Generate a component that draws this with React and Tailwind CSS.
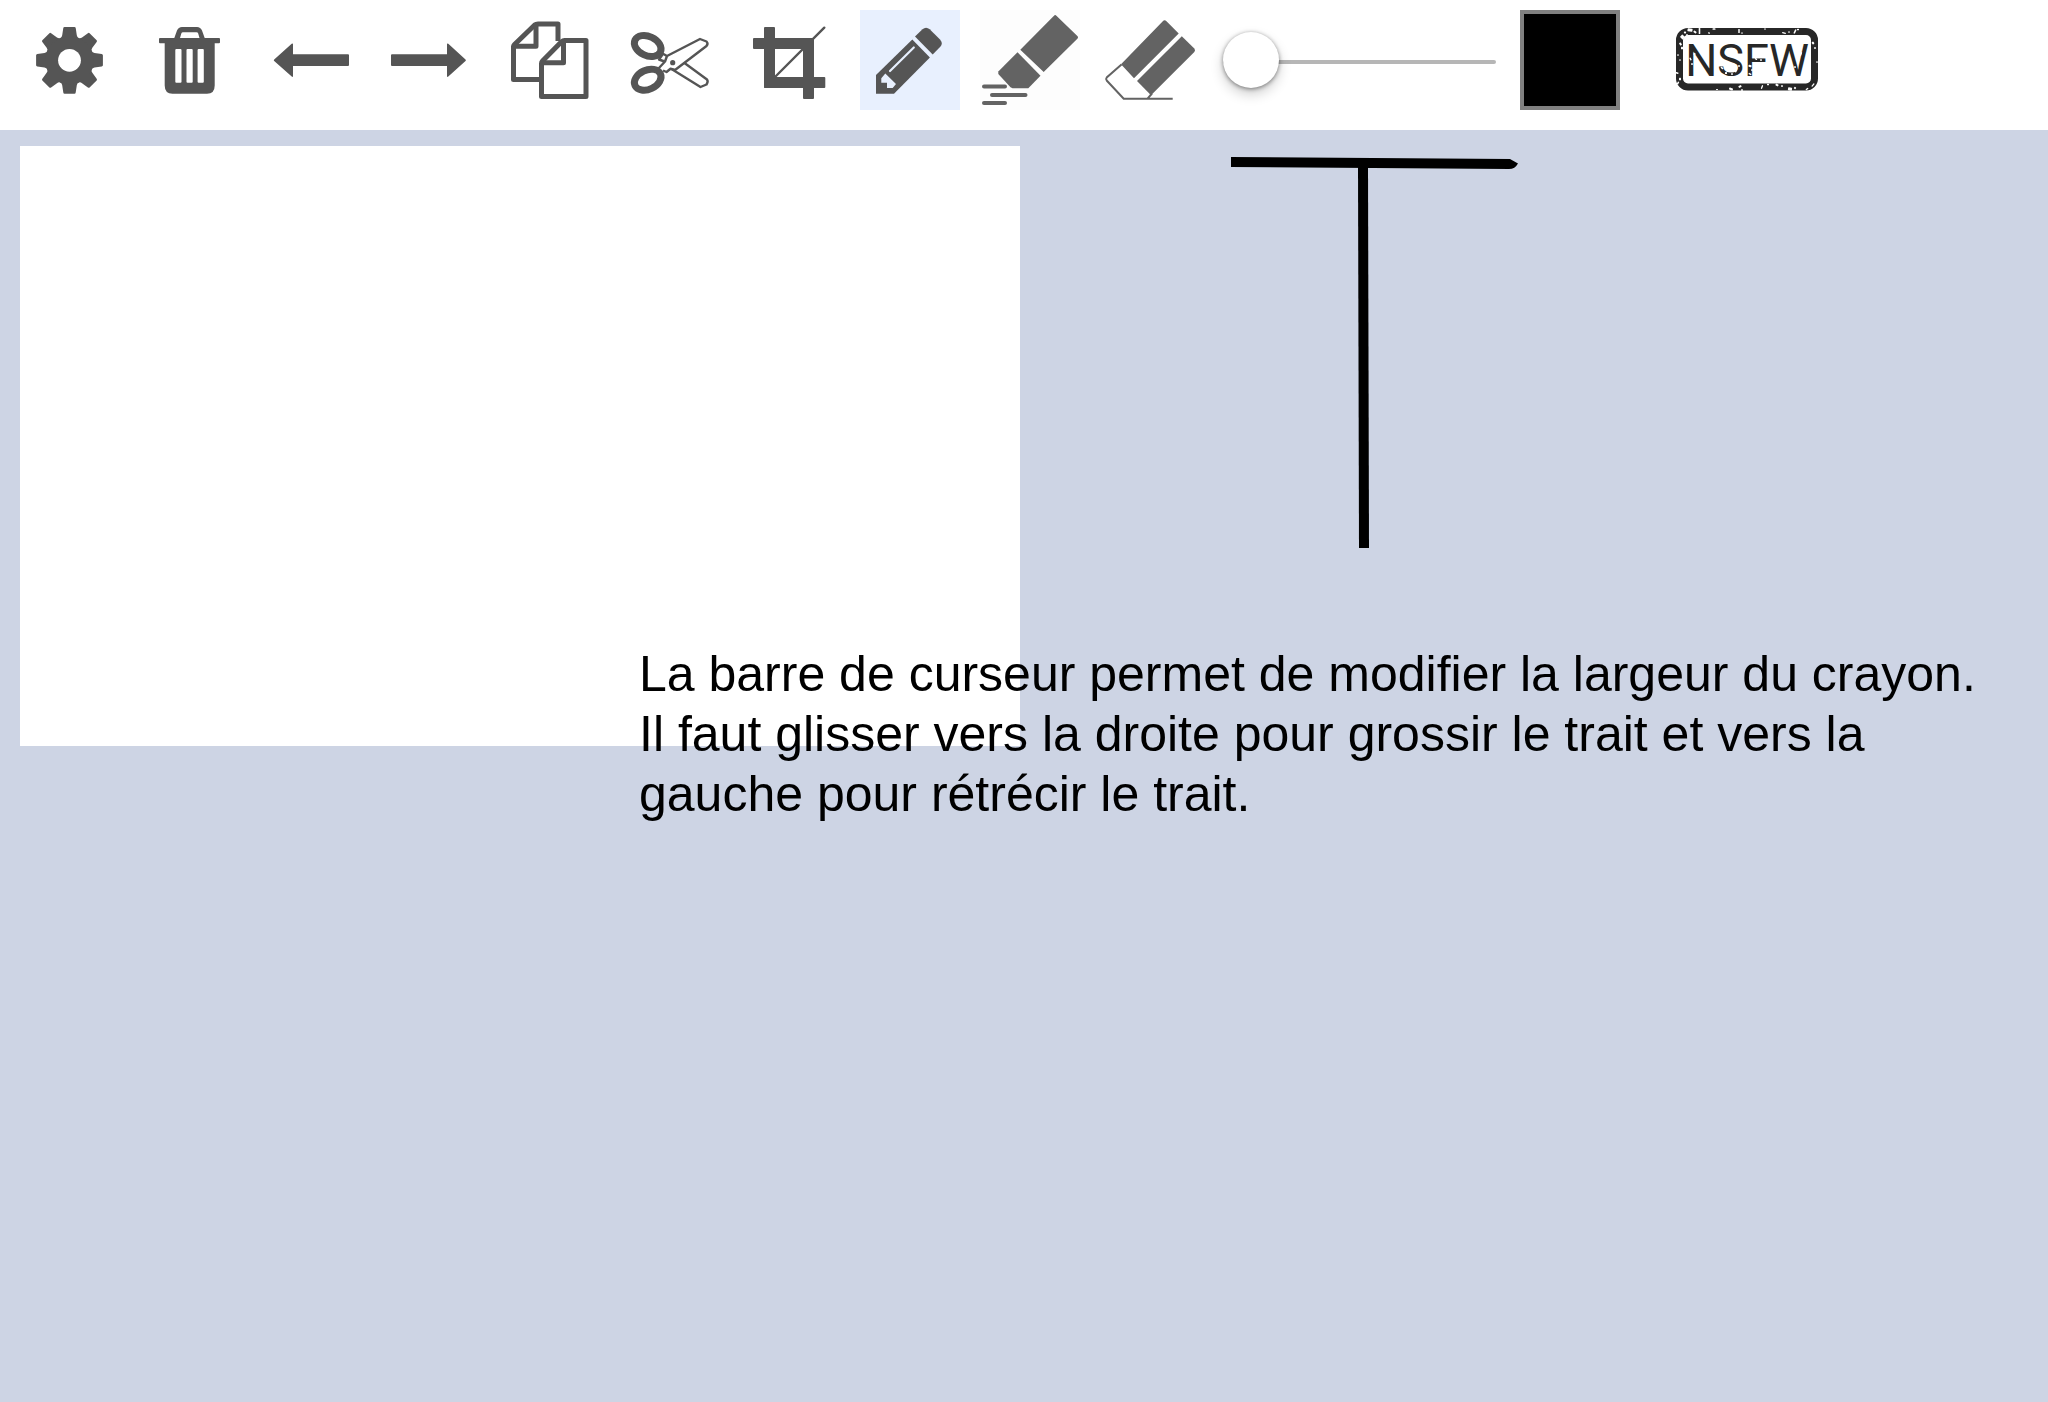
const GREY = "#555555";
const SOFT = "#636363";

function Icon({ children }) {
  return (
    <svg viewBox="0 0 100 100" className="block size-full" aria-hidden="true">
      {children}
    </svg>
  );
}

const GearIcon = () => (
  <Icon>
    <g transform="translate(49.5 50.3)">
      <g fill={GREY}>
        {[0, 45, 90, 135, 180, 225, 270, 315].map((a) => (
          <path
            key={a}
            transform={`rotate(${a})`}
            d="M-9.5-22Q-7.5-23-7.3-25L-6.2-32.2Q-6-33.4-5-33.4H5Q6-33.4 6.2-32.2L7.3-25Q7.5-23 9.5-22L5-10H-5Z"
          />
        ))}
        <circle r="24" />
      </g>
      <circle r="11.4" fill="#fff" />
    </g>
  </Icon>
);

const TrashIcon = () => (
  <Icon>
    <path
      fill={GREY}
      fillRule="evenodd"
      d="M34.3 28L37 20.5Q38.5 17 42 17H57Q60.5 17 62 20.5L64.7 28H79Q80 28 80 29V32.3Q80 33.3 79 33.3H74.7V75.500Q74.700 83.700 67 83.700H32.500Q24.700 83.700 24.700 75.500V33.300H20Q19 33.300 19 32.300V29Q19 28 20 28ZM40 28H59.500L58.200 23.500Q57.800 22.300 56.500 22.300H43Q41.700 22.300 41.300 23.500Z"
    />
    <g fill="#fff">
      <rect x="35.3" y="39" width="6.2" height="33.7" rx="1" />
      <rect x="46.5" y="39" width="6.2" height="33.7" rx="1" />
      <rect x="57.6" y="39" width="6.2" height="33.7" rx="1" />
    </g>
  </Icon>
);

const UndoIcon = () => (
  <Icon>
    <path
      fill={GREY}
      d="M14.2 49.5L31.7 33.8Q33 32.8 33 34.3V44.3H88Q89 44.3 89 45.3V55Q89 56 88 56H33V66Q33 67.6 31.7 66.6L14.2 51Q13.3 50.3 14.2 49.5Z"
    />
  </Icon>
);

const RedoIcon = () => (
  <Icon>
    <path
      fill={GREY}
      d="M85.5 49.5L68.3 33.8Q67 32.8 67 34.3V44.3H12Q11 44.3 11 45.3V55Q11 56 12 56H67V66Q67 67.6 68.3 66.6L85.5 51Q86.4 50.3 85.5 49.5Z"
    />
  </Icon>
);

const CopyIcon = () => (
  <Icon>
    <g fill="none" stroke={GREY} strokeWidth="5" strokeLinejoin="round">
      <path d="M39.5 69.5H13.5V36.5Q13.5 35.5 14.3 34.7L34.7 15Q36 13.9 38 13.9H58V31" />
      <path d="M36 14V36.3H14" />
      <path d="M86 86.5H41.5V53.5Q41.5 52 42.5 51L61.5 31.8Q63 30.5 64.5 30.5H86Z" />
      <path d="M63.5 31V52.7H42" />
    </g>
  </Icon>
);

const ScissorsIcon = () => (
  <Icon>
    <g fill="none" stroke={GREY} strokeWidth="7">
      <ellipse cx="27.7" cy="36" rx="14" ry="9.6" transform="rotate(25 27.7 36)" />
      <ellipse cx="27.7" cy="69.7" rx="14" ry="9.6" transform="rotate(-25 27.7 69.7)" />
    </g>
    <g fill="none" stroke={GREY} strokeWidth="2.4" strokeLinejoin="round">
      <path d="M42.5 43.5L47 46L80 29L86.5 31.5Q88.500 33.500 86.500 36L55 60L50.500 58.700L46.500 62L43 60.500" />
      <path d="M47 46L45 51.500L38.500 58.500" />
      <path d="M42.5 44.5L39 49.5L44.5 51.5" />
      <path d="M64.5 53L87 69.5Q88.5 71.5 86.500 74.500L80.500 77L51.500 59" />
    </g>
    <circle cx="52.7" cy="52.7" r="2.6" fill={GREY} />
  </Icon>
);

const CropIcon = () => (
  <Icon>
    <g fill={GREY}>
      <rect x="24" y="17" width="11" height="61" rx="1" />
      <rect x="13" y="28" width="61" height="11" rx="1" />
      <rect x="63" y="28" width="11" height="61" rx="1" />
      <rect x="24" y="67" width="61.3" height="11" rx="1" />
    </g>
    <path d="M35.5 66.5L84.3 17.7" stroke={GREY} strokeWidth="2.4" strokeLinecap="round" />
  </Icon>
);

const PencilIcon = () => (
  <Icon>
    <path fill={GREY} d="M16 83.7V65L52.3 29.5L69.9 47.4L34 83.7Z" />
    <path
      fill={GREY}
      d="M55 26.5L62.5 19.3Q66 16 69.7 19.3L80 29.5Q83.5 33.3 80.3 36.8L72.7 44.4Z"
    />
    <path d="M30 61L53.8 37.5" stroke="#e8f0fe" strokeWidth="2.2" strokeLinecap="round" />
    <path fill="#e8f0fe" d="M25.3 63.5L36 74L32.7 78H27V72.7H21.3V68.3Z" />
  </Icon>
);

const HighlighterIcon = () => (
  <Icon>
    <g fill={SOFT}>
      <path d="M40.3 39.7L74 5.7Q75.2 4.5 76.4 5.7L97.6 26.2Q98.6 27.3 97.6 28.4L63.7 62Z" />
      <path d="M37.5 42.3L60.5 65.7L48.3 78.3H32.5L30.5 77.3L18.3 64V61.5Z" />
    </g>
    <g stroke={SOFT} strokeWidth="4" strokeLinecap="round">
      <path d="M4 76.4H25" />
      <path d="M12 85H45.5" />
      <path d="M4 93H25" />
    </g>
  </Icon>
);

const EraserIcon = () => (
  <Icon>
    <path
      d="M21.5 54.5L6.7 67.5Q5.5 69 6.7 70.5L23.7 88.7H72.7M52 83.5L47.5 88.7"
      fill="none"
      stroke={SOFT}
      strokeWidth="2"
    />
    <g fill={SOFT}>
      <path d="M21 54.3L62.8 11.2Q64.5 9.2 66.5 11.2L78.7 23.5L34 68.3Z" />
      <path d="M81.8 26.3L94.3 38.5Q95.8 40.3 94.3 42L51 85.3L37 71Z" />
    </g>
  </Icon>
);

// Worn specks of the rubber stamp: x, y, width, height, angle
const specks = [
  [14, 2, 5, 3, 10], [19, 4, 3, 2, 40], [23.5, 3, 1.6, 6, 0], [9, 4.5, 2, 2, 30],
  [6.5, 9, 4, 3.5, 45], [11, 7, 2, 1.5, 0], [4.5, 16, 3, 2, 60], [6, 20, 2, 2.5, 0],
  [2, 27, 1.6, 1.6, 0], [4, 32, 1.5, 1.5, 0], [1, 45, 3, 1.5, 20], [4, 51, 2, 2.5, 0],
  [2, 55, 1.5, 3, 30], [38, 1, 3, 1.5, 0], [33, 5, 2, 1.3, 20], [63, 3, 1.5, 4, 0],
  [66, 5, 2, 1.2, 0], [89, 1, 2, 1.2, 0], [108, 5, 4, 1.3, 15], [113, 4, 1.5, 1.5, 0],
  [119, 3.5, 1.6, 4.5, 25], [122, 1.5, 2, 1.5, 0], [137, 15, 2.5, 2, 50], [139, 20, 1.5, 2, 0],
  [141, 34, 1.5, 1.5, 0], [41, 61.5, 2, 1, 0], [55, 61, 4, 2, 20], [64, 58.5, 2, 3, 60],
  [66, 62, 2, 1.5, 0], [86, 59, 1.3, 4, 20], [92, 56.5, 2, 1.5, 0], [101, 57, 3, 2, 30],
  [106, 58, 2, 1.5, 0], [114, 61, 4, 3, 10], [119, 60, 2, 2, 40], [131, 61, 3, 1.3, 140],
  [137, 57, 4, 1.3, 130], [14.5, 31, 3, 1.5, 60], [18.5, 26, 2, 2, 20], [16, 36, 2, 1.5, 0],
  [21, 32, 1.5, 3, 30], [46, 40, 3, 1.5, 40], [50, 45, 2, 2, 0], [56, 46, 2, 1.5, 0],
  [60, 43, 3, 1.5, 120], [63, 38, 1.5, 2, 0], [74, 38, 3, 2, 20], [76, 42, 2, 1.5, 0],
  [74, 46, 3, 1.5, 30], [80, 31, 2.5, 1.5, 30], [85, 32, 2, 1.5, 0], [125, 26, 1.3, 4, 20],
  [122.5, 33, 1.5, 3.5, 15], [119, 39, 2, 1.5, 0],
];

function StampIcon() {
  return (
    <svg viewBox="0 0 144 64" className="block h-16 w-36" role="img" aria-label="NSFW">
      <rect x="3.5" y="3.5" width="135" height="55.5" rx="8.500" fill="none" stroke="#272727" strokeWidth="7" />
      <text
        x="71"
        y="48"
        textAnchor="middle"
        fill="#272727"
        fontSize="45"
        fontFamily="Roboto, sans-serif"
      >
        NSFW
      </text>
      <g fill="#fff">
        {specks.map(([x, y, w, h, a]) => (
          <rect
            key={`${x}-${y}`}
            x={x - w / 2}
            y={y - h / 2}
            width={w}
            height={h}
            rx="0.6"
            transform={`rotate(${a} ${x} ${y})`}
          />
        ))}
      </g>
    </svg>
  );
}

const tools = [
  { label: "Paramètres", icon: GearIcon },
  { label: "Supprimer", icon: TrashIcon },
  { label: "Annuler", icon: UndoIcon },
  { label: "Rétablir", icon: RedoIcon },
  { label: "Copier", icon: CopyIcon },
  { label: "Couper", icon: ScissorsIcon },
  { label: "Rogner", icon: CropIcon },
  { label: "Crayon", icon: PencilIcon, tone: "bg-[#e8f0fe]" },
  { label: "Surligneur", icon: HighlighterIcon, tone: "bg-[#fdfdfd]" },
  { label: "Gomme", icon: EraserIcon },
];

function Toolbar() {
  return (
    <header className="flex items-start gap-5 bg-white px-5 pt-2.5 pb-5">
      {tools.map(({ label, icon: Glyph, tone }) => (
        <button
          key={label}
          type="button"
          aria-label={label}
          aria-pressed={label === "Crayon"}
          className={`size-25 shrink-0 ${tone || ""}`}
        >
          <Glyph />
        </button>
      ))}
      <div className="flex h-25 w-70 shrink-0 items-center pt-1 pr-1 pl-[3px]">
        <input
          type="range"
          min="1"
          max="100"
          defaultValue="1"
          aria-label="Largeur du crayon"
          className="h-14 w-full appearance-none bg-transparent [&::-webkit-slider-runnable-track]:h-1 [&::-webkit-slider-runnable-track]:rounded-full [&::-webkit-slider-runnable-track]:bg-[#b6b6b6] [&::-webkit-slider-thumb]:-mt-7 [&::-webkit-slider-thumb]:size-14 [&::-webkit-slider-thumb]:appearance-none [&::-webkit-slider-thumb]:rounded-full [&::-webkit-slider-thumb]:bg-white [&::-webkit-slider-thumb]:shadow-[0_1px_4px_rgba(0,0,0,0.45),0_6px_13px_rgba(0,0,0,0.2)]"
        />
      </div>
      <input
        type="color"
        defaultValue="#000000"
        aria-label="Couleur"
        className="size-25 shrink-0 appearance-none border-4 border-[#808080] bg-black p-0 [&::-webkit-color-swatch]:border-0 [&::-webkit-color-swatch-wrapper]:p-0"
      />
      <button type="button" className="flex h-25 w-54 shrink-0 items-center justify-center">
        <StampIcon />
      </button>
    </header>
  );
}

export default function App() {
  return (
    <div className="flex min-h-screen flex-col bg-[#cdd4e4] font-['Liberation_Sans',Arial,sans-serif] text-black">
      <Toolbar />
      <main className="relative grow px-5 pt-4">
        <div className="h-150 w-250 bg-white" />
        <svg
          viewBox="0 0 290 394"
          className="absolute top-6 left-[1230px] h-[394px] w-[290px]"
          aria-hidden="true"
        >
          <path d="M1 3L280 5L288 9.5Q285 15 279 15L1 13Z" />
          <path d="M128 12H138L139 394H129Z" />
        </svg>
        <p className="absolute top-[514px] left-[639px] w-[1360px] text-[50px] leading-[60px]">
          La barre de curseur permet de modifier la largeur du crayon. Il faut glisser vers la
          droite pour grossir le trait et vers la gauche pour rétrécir le trait.
        </p>
      </main>
    </div>
  );
}
